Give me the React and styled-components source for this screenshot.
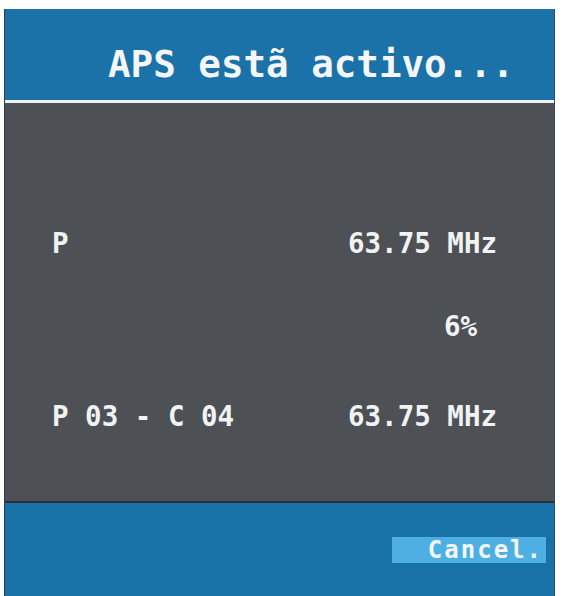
import React from 'react';
import styled, { createGlobalStyle } from 'styled-components';

const GlobalStyle = createGlobalStyle`
  html, body {
    margin: 0;
    padding: 0;
    background: #ffffff;
  }
  body {
    font-family: "DejaVu Sans Mono", "Liberation Mono", monospace;
  }
`;

const Panel = styled.div`
  display: flex;
  flex-direction: column;
  width: 551px;
  height: 587px;
  margin: 9px 0 0 4px;
  border-left: 1px solid #2d3e4c;
  border-right: 1px solid #2d4a60;
  box-sizing: border-box;
`;

const Header = styled.div`
  height: 94px;
  box-sizing: border-box;
  padding: 36px 0 0 103px;
  background: #1a72a9;
  border-bottom: 3px solid #eef3f6;
`;

const Title = styled.h1`
  margin: 0;
  font-size: 37.5px;
  line-height: 38px;
  font-weight: bold;
  color: #f4f6f8;
  white-space: pre;
`;

const Body = styled.div`
  flex: 1;
  display: grid;
  grid-template-columns: 296px 1fr;
  align-content: start;
  padding: 126px 0 0 47px;
  background: #4d5155;
  border-bottom: 2px solid #2a2f33;
`;

const Cell = styled.div`
  margin-top: ${p => p.$top || 0}px;
  padding-left: ${p => p.$indent || 0}px;
  font-size: 27.5px;
  line-height: 28px;
  font-weight: bold;
  color: #f1f2f3;
  white-space: pre;
`;

const Footer = styled.div`
  height: 93px;
  box-sizing: border-box;
  display: flex;
  justify-content: flex-end;
  align-items: flex-start;
  padding: 34px 8px 0 0;
  background: #1872a8;
`;

const CancelButton = styled.button`
  width: 154px;
  height: 26px;
  padding: 0 3px 0 0;
  border: none;
  background: #4eb0e2;
  color: #f3f7fa;
  font-family: "DejaVu Sans Mono", "Liberation Mono", monospace;
  font-size: 24px;
  line-height: 26px;
  font-weight: bold;
  letter-spacing: 2px;
  text-align: right;
`;

const rows = [
  { label: 'P', value: '63.75 MHz', top: 0 },
  { label: '', value: '6%', top: 55, indent: 96 },
  { label: 'P 03 - C 04', value: '63.75 MHz', top: 62 },
];

export default function App() {
  return (
    <>
      <GlobalStyle />
      <Panel>
        <Header>
          <Title>APS estã activo...</Title>
        </Header>
        <Body>
          {rows.map((r, i) => (
            <React.Fragment key={i}>
              <Cell $top={r.top}>{r.label}</Cell>
              <Cell $top={r.top} $indent={r.indent}>{r.value}</Cell>
            </React.Fragment>
          ))}
        </Body>
        <Footer>
          <CancelButton>Cancel.</CancelButton>
        </Footer>
      </Panel>
    </>
  );
}
